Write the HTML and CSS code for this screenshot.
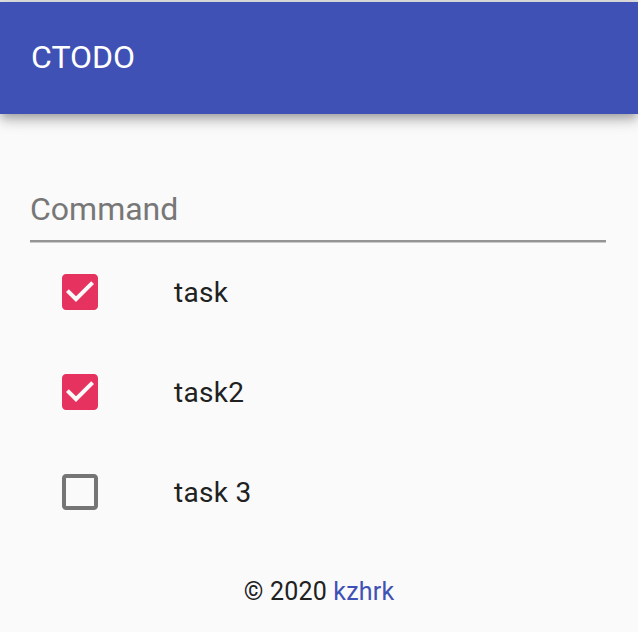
FILE: index.html
```html
<!DOCTYPE html>
<html lang="en">
<head>
<meta charset="utf-8">
<title>CTODO</title>
<link rel="stylesheet" href="styles.css">
</head>
<body>
<div class="topline"></div>
<header class="appbar">
  <h1 class="title">CTODO</h1>
</header>
<main class="content">
  <div class="field">
    <input class="command" type="text" placeholder="Command">
  </div>
  <ul class="list">
    <li class="item">
      <svg class="check checked" viewBox="0 0 24 24" width="48" height="48"><path d="M19 3H5c-1.11 0-2 .9-2 2v14c0 1.1.89 2 2 2h14c1.11 0 2-.9 2-2V5c0-1.1-.89-2-2-2zm-9 14l-5-5 1.41-1.41L10 14.17l7.59-7.59L19 8l-9 9z"/></svg>
      <span class="label">task</span>
    </li>
    <li class="item">
      <svg class="check checked" viewBox="0 0 24 24" width="48" height="48"><path d="M19 3H5c-1.11 0-2 .9-2 2v14c0 1.1.89 2 2 2h14c1.11 0 2-.9 2-2V5c0-1.1-.89-2-2-2zm-9 14l-5-5 1.41-1.41L10 14.17l7.59-7.59L19 8l-9 9z"/></svg>
      <span class="label">task2</span>
    </li>
    <li class="item">
      <svg class="check" viewBox="0 0 24 24" width="48" height="48"><path d="M19 5v14H5V5h14m0-2H5c-1.1 0-2 .9-2 2v14c0 1.1.9 2 2 2h14c1.1 0 2-.9 2-2V5c0-1.1-.9-2-2-2z"/></svg>
      <span class="label">task 3</span>
    </li>
  </ul>
</main>
<footer class="footer">© 2020 <a class="link" href="#">kzhrk</a></footer>
</body>
</html>
```
FILE: styles.css
```css
html, body {
  margin: 0;
  padding: 0;
  background: #fafafa;
  font-family: Roboto, "Liberation Sans", sans-serif;
}

.topline {
  height: 2px;
  background: #e2e2e2;
}

.appbar {
  height: 112px;
  background: #3f51b5;
  display: flex;
  align-items: center;
  padding-left: 31px;
  box-shadow: 0 4px 8px -2px rgba(0,0,0,0.2), 0 8px 10px 0 rgba(0,0,0,0.14), 0 2px 20px 0 rgba(0,0,0,0.12);
  position: relative;
  z-index: 1;
}

.title {
  margin: 0;
  color: #fff;
  font-size: 32px;
  font-weight: 400;
  letter-spacing: 0;
  line-height: 38px;
  padding-bottom: 2px;
}

.content {
  padding: 0 32px 0 30px;
}

.field {
  margin-top: 76px;
}

.command {
  display: block;
  width: 100%;
  box-sizing: border-box;
  height: 52px;
  margin: 0;
  padding: 0 0 12px 0;
  border: none;
  border-bottom: 2px solid #949494;
  box-shadow: 0 1px 0 #c9c9c9;
  background: transparent;
  font-family: Roboto, "Liberation Sans", sans-serif;
  font-size: 32px;
  line-height: 38px;
  color: #212121;
  outline: none;
}

.command::placeholder {
  color: #777;
  opacity: 1;
}

.list {
  list-style: none;
  margin: 0;
  padding: 0;
}

.item {
  height: 100px;
  display: flex;
  align-items: center;
}

.check {
  display: block;
  margin-left: 26px;
  fill: #757575;
}

.check.checked {
  fill: #e5325f;
}

.label {
  margin-left: 70px;
  font-size: 28px;
  letter-spacing: 0.3px;
  color: #212121;
}

.footer {
  margin-top: 35px;
  text-align: center;
  font-size: 25px;
  letter-spacing: 0.2px;
  color: #212121;
}

.link {
  color: #3f51b5;
  text-decoration: none;
}
```
